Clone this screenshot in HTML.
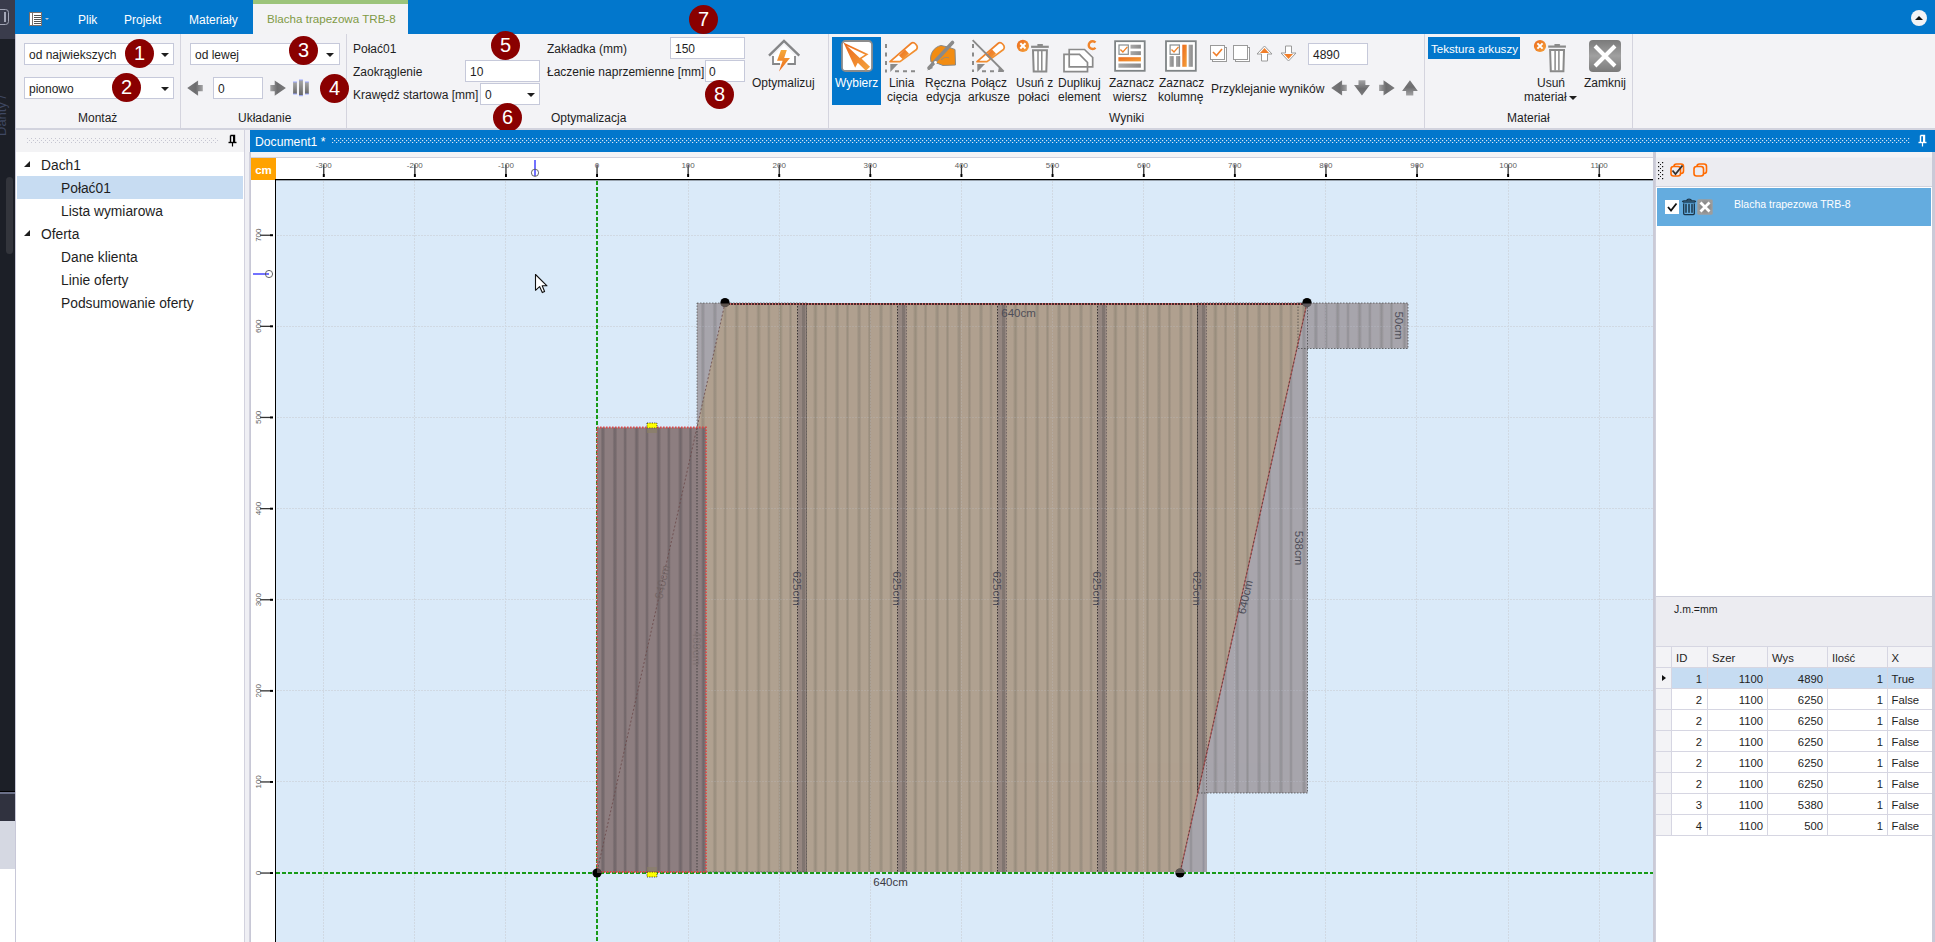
<!DOCTYPE html>
<html><head><meta charset="utf-8">
<style>
*{box-sizing:border-box}
html,body{margin:0;padding:0}
body{width:1935px;height:942px;overflow:hidden;position:relative;background:#fff;font-family:"Liberation Sans",sans-serif;font-size:12px;color:#1e1e1e}
.a{position:absolute}
.t{position:absolute;white-space:nowrap;line-height:1}
.blue{background:#0277cc}
.sep{position:absolute;width:1px;background:#d4d4de}
.cb{position:absolute;background:#fff;border:1px solid #c6c9da}
.arr{position:absolute;width:0;height:0;border-left:4px solid transparent;border-right:4px solid transparent;border-top:4px solid #1e1e1e}
.num{position:absolute;width:29px;height:29px;border-radius:50%;background:#8a0000;color:#fff;font-size:20px;line-height:29px;text-align:center}
.rl{position:absolute;white-space:nowrap;line-height:1;text-align:center}
</style></head>
<body>
<!-- left dark strip -->
<div class="a" style="left:0;top:0;width:15px;height:942px;background:#1c1f27"></div>
<div class="a" style="left:0;top:0;width:15px;height:39px;background:#3a3c4c"></div>
<div class="a" style="left:-6px;top:9px;width:15px;height:16px;border:1.4px solid #a3a6b6;border-radius:3.5px"></div>
<div class="a" style="left:4px;top:12px;width:2px;height:10px;background:#a3a6b6"></div>
<div class="a" style="left:0;top:39px;width:15px;height:140px;overflow:hidden"><div class="t" style="left:-6px;top:95px;transform-origin:0 0;transform:rotate(-90deg);color:#3f4862;font-size:13px;left:-5px;top:97px">Danty /</div></div>
<div class="a" style="left:6px;top:177px;width:7px;height:77px;background:#33353c;border-radius:4px"></div>
<div class="a" style="left:0;top:791px;width:15px;height:1px;background:#000"></div>
<div class="a" style="left:0;top:792px;width:15px;height:2px;background:#6b7088"></div>
<div class="a" style="left:0;top:794px;width:15px;height:27px;background:#30323f"></div>
<div class="a" style="left:0;top:821px;width:15px;height:48px;background:#d5d8e2"></div>
<div class="a" style="left:0;top:869px;width:15px;height:73px;background:#fff"></div>
<div class="a" style="left:15px;top:34px;width:1px;height:908px;background:#c8c8d8"></div>

<!-- title/tab bar -->
<div class="a blue" style="left:15px;top:0;width:1920px;height:34px"></div>

<!-- app menu icon -->
<div class="a" style="left:29px;top:12px;width:13px;height:14px;background:#fff;border:1px solid #7a6f6a"></div>
<div class="a" style="left:32px;top:13px;width:1px;height:12px;background:#7a6f6a"></div>
<div class="a" style="left:34px;top:15px;width:7px;height:1px;background:#555"></div>
<div class="a" style="left:34px;top:17px;width:7px;height:1px;background:#555"></div>
<div class="a" style="left:34px;top:19px;width:7px;height:1px;background:#555"></div>
<div class="a" style="left:34px;top:21px;width:7px;height:1px;background:#555"></div>
<div class="a" style="left:34px;top:23px;width:7px;height:1px;background:#555"></div>
<div class="a" style="left:45px;top:18px;width:0;height:0;border-left:2px solid transparent;border-right:2px solid transparent;border-top:2px solid #b9c6d6"></div>
<div class="t" style="left:78px;top:14px;color:#fff;font-size:12px">Plik</div>
<div class="t" style="left:124px;top:14px;color:#fff;font-size:12px">Projekt</div>
<div class="t" style="left:189px;top:14px;color:#fff;font-size:12px">Materiały</div>
<div class="a" style="left:253px;top:0;width:155px;height:34px;background:#f3f3f5"></div>
<div class="a" style="left:253px;top:0;width:155px;height:4px;background:#9cc47a"></div>
<div class="t" style="left:267px;top:13px;color:#7f9a45;font-size:11.6px">Blacha trapezowa TRB-8</div>
<div class="a" style="left:1911px;top:10px;width:16px;height:16px;border-radius:50%;background:#f3f3f5"></div>
<div class="a" style="left:1915px;top:16px;width:0;height:0;border-left:4px solid transparent;border-right:4px solid transparent;border-bottom:4px solid #111"></div>

<!-- ribbon -->
<div class="a" style="left:16px;top:34px;width:1919px;height:94px;background:#f3f3f6"></div>
<div class="a" style="left:16px;top:128px;width:1919px;height:2px;background:#d2d3de"></div>
<div class="sep" style="left:180px;top:34px;height:94px"></div>
<div class="sep" style="left:346px;top:34px;height:94px"></div>
<div class="sep" style="left:828px;top:34px;height:94px"></div>
<div class="sep" style="left:1424px;top:34px;height:94px"></div>
<div class="sep" style="left:1632px;top:34px;height:94px"></div>

<!-- Montaz group -->
<div class="cb" style="left:24px;top:43px;width:150px;height:22px"></div>
<div class="t" style="left:29px;top:49px">od najwiekszych</div>
<div class="arr" style="left:161px;top:53px"></div>
<div class="cb" style="left:24px;top:77px;width:150px;height:22px"></div>
<div class="t" style="left:29px;top:83px">pionowo</div>
<div class="arr" style="left:161px;top:87px"></div>
<div class="t" style="left:78px;top:112px">Montaż</div>
<div class="num" style="left:125px;top:39px">1</div>
<div class="num" style="left:112px;top:73px">2</div>

<!-- Ukladanie -->
<div class="cb" style="left:190px;top:43px;width:150px;height:22px"></div>
<div class="t" style="left:195px;top:49px">od lewej</div>
<div class="arr" style="left:326px;top:53px"></div>
<svg class="a" style="left:186px;top:79px" width="19" height="18" viewBox="186 79 19 18"><defs><linearGradient id="gl187" gradientUnits="userSpaceOnUse" x1="187.2" y1="0" x2="202.79999999999998" y2="0"><stop offset="0" stop-color="#7a7a7c"/><stop offset="0.55" stop-color="#6c6c6e"/><stop offset="1" stop-color="#a4a4a6"/></linearGradient></defs><path d="M187.2 88.10000000000001 L198.1 80.4 V84.9 H202.79999999999998 V91.30000000000001 H198.1 V95.80000000000001 Z" fill="url(#gl187)"/></svg>
<div class="cb" style="left:213px;top:77px;width:50px;height:22px"></div>
<div class="t" style="left:218px;top:83px">0</div>
<svg class="a" style="left:269px;top:79px" width="19" height="18" viewBox="269 79 19 18"><defs><linearGradient id="gr270" gradientUnits="userSpaceOnUse" x1="270.3" y1="0" x2="285.90000000000003" y2="0"><stop offset="0" stop-color="#a4a4a6"/><stop offset="0.45" stop-color="#6c6c6e"/><stop offset="1" stop-color="#7a7a7c"/></linearGradient></defs><path d="M285.90000000000003 88.10000000000001 L274.7 80.4 V84.9 H270.3 V91.30000000000001 H274.7 V95.80000000000001 Z" fill="url(#gr270)"/></svg>
<svg class="a" style="left:290px;top:78px" width="22" height="20" viewBox="290 78 22 20"><defs><linearGradient id="gbar" x1="0" y1="0" x2="0" y2="1"><stop offset="0" stop-color="#a8a8a8"/><stop offset="1" stop-color="#666"/></linearGradient></defs><rect x="293.1" y="82" width="3.8" height="12" fill="url(#gbar)"/><rect x="299" y="80" width="3.9" height="15.5" fill="url(#gbar)"/><rect x="305" y="82" width="3.8" height="12" fill="url(#gbar)"/><rect x="293.1" y="81.5" width="3.8" height="1" fill="#9aa6ff"/><rect x="293.1" y="93.5" width="3.8" height="1" fill="#9aa6ff"/><rect x="299" y="79.5" width="3.9" height="1" fill="#9aa6ff"/><rect x="299" y="95.2" width="3.9" height="1" fill="#9aa6ff"/><rect x="305" y="81.5" width="3.8" height="1" fill="#9aa6ff"/><rect x="305" y="93.5" width="3.8" height="1" fill="#9aa6ff"/></svg>
<div class="t" style="left:238px;top:112px">Układanie</div>
<div class="num" style="left:289px;top:36px">3</div>
<div class="num" style="left:320px;top:74px">4</div>

<!-- Optymalizacja -->
<div class="t" style="left:353px;top:43px">Połać01</div>
<div class="t" style="left:353px;top:66px">Zaokrąglenie</div>
<div class="t" style="left:353px;top:89px">Krawędź startowa [mm]</div>
<div class="cb" style="left:465px;top:60px;width:75px;height:22px"></div>
<div class="t" style="left:470px;top:66px">10</div>
<div class="cb" style="left:480px;top:83px;width:60px;height:22px"></div>
<div class="t" style="left:485px;top:89px">0</div>
<div class="arr" style="left:527px;top:93px"></div>
<div class="t" style="left:547px;top:43px">Zakładka (mm)</div>
<div class="t" style="left:547px;top:66px">Łaczenie naprzemienne [mm]</div>
<div class="cb" style="left:670px;top:37px;width:75px;height:22px"></div>
<div class="t" style="left:675px;top:43px">150</div>
<div class="cb" style="left:705px;top:60px;width:40px;height:22px"></div>
<div class="t" style="left:709px;top:66px">0</div>
<div class="t" style="left:551px;top:112px">Optymalizacja</div>
<svg class="a" style="left:764px;top:37px" width="40" height="37" viewBox="764 37 40 37"><defs><linearGradient id="gbolt" x1="0" y1="0" x2="0" y2="1"><stop offset="0" stop-color="#f5a93a"/><stop offset="1" stop-color="#ec6a1c"/></linearGradient></defs><path d="M773 56 L784 45 L795 56 V64 H773 Z" fill="#fff"/><path d="M769 55.6 L784 41 L799.3 55.6" fill="none" stroke="#858688" stroke-width="2.4" stroke-linejoin="miter"/><path d="M773 56 V64 H780 M787.5 64 H795 V56" fill="none" stroke="#858688" stroke-width="1.8"/><path d="M781 50.1 L786.8 50.1 L784.2 58 L790 58 L779 71.5 L782.6 60.8 L777 60.8 Z" fill="url(#gbolt)"/></svg>
<div class="t" style="left:752px;top:77px">Optymalizuj</div>
<div class="num" style="left:491px;top:31px">5</div>
<div class="num" style="left:493px;top:103px">6</div>
<div class="num" style="left:689px;top:5px">7</div>
<div class="num" style="left:705px;top:80px">8</div>

<!-- Wyniki -->
<div class="a blue" style="left:832px;top:37px;width:49px;height:68px"></div>
<svg class="a" style="left:840px;top:39px" width="34" height="34" viewBox="840 39 34 34"><defs><linearGradient id="gor" x1="0" y1="0" x2="1" y2="1"><stop offset="0" stop-color="#ec6a1c"/><stop offset="1" stop-color="#f4a23c"/></linearGradient></defs><rect x="842" y="41" width="30" height="30" rx="3.5" fill="#fff" stroke="#8c8c8c" stroke-width="1.8"/><path d="M845.2 44.3 L866.8 54.4 L860.3 58.6 L868.8 66.8 L865.9 69.6 L857.6 61.3 L855.2 65.8 Z" fill="none" stroke="url(#gor)" stroke-width="1.7" stroke-linejoin="miter"/><path d="M845.2 44.3 L860.3 58.6 L868.8 66.8 L865.9 69.6 L857.6 61.3 L855.2 65.8 Z" fill="url(#gor)"/></svg>
<div class="t" style="left:835px;top:77px;color:#fff">Wybierz</div>
<svg class="a" style="left:884px;top:38px" width="36" height="36" viewBox="884 38 36 36"><path d="M886 44 V72.5" stroke="#8a8a8a" stroke-width="2" stroke-dasharray="4 4.5"/><path d="M895 71.2 H916" stroke="#8a8a8a" stroke-width="2" stroke-dasharray="4 4"/><path d="M890.3 72 V64 H898 Z" fill="#8a8a8a"/><path d="M890 61.6 L900 61.6 L916.5 49.5 C919 46 914 41 911 43.5 Z" fill="#fff" stroke="url(#gor)" stroke-width="1.7" stroke-linejoin="round"/><path d="M899 55.6 L905 49.6 L909 53.6 L903 59.6 Z" fill="url(#gor)"/></svg>
<div class="t" style="left:889px;top:77px">Linia</div>
<div class="t" style="left:887px;top:91px">cięcia</div>
<svg class="a" style="left:924px;top:38px" width="34" height="36" viewBox="924 38 34 36"><path d="M931 62 C929 54 934 47 941 45.5 L948 47 L955 49.5 L955.5 65 L943 65.5 L938 63.5 Z" fill="#f28c12" stroke="#8a8a8a" stroke-width="1"/><path d="M952.5 42.5 L929 68" stroke="#8a8a8a" stroke-width="3.6" stroke-linecap="round"/><path d="M931 66 L927 70.5 L933 68" fill="#8a8a8a"/><path d="M941 60 C944 57 947 57 949 58" stroke="#8a8a8a" stroke-width="0.9" fill="none"/><circle cx="935.5" cy="62.5" r="1.4" fill="#fff"/></svg>
<div class="t" style="left:925px;top:77px">Ręczna</div>
<div class="t" style="left:926px;top:91px">edycja</div>
<svg class="a" style="left:970px;top:38px" width="36" height="36" viewBox="970 38 36 36"><path d="M973 44 V72" stroke="#8a8a8a" stroke-width="2" stroke-dasharray="4 4.5"/><path d="M982 71.2 H997" stroke="#8a8a8a" stroke-width="2" stroke-dasharray="4 4"/><path d="M977.3 72 V64 H985 Z" fill="#8a8a8a"/><path d="M977 61.6 L987 61.6 L1003.5 49.5 C1006 46 1001 41 998 43.5 Z" fill="#fff" stroke="url(#gor)" stroke-width="1.7" stroke-linejoin="round"/><path d="M986 55.6 L992 49.6 L996 53.6 L990 59.6 Z" fill="url(#gor)"/><path d="M972.6 40.2 L1003.7 71.5" stroke="#8a8a8a" stroke-width="1.8"/><path d="M998 72 L1004 72 L999 66.5 Z" fill="#8a8a8a"/></svg>
<div class="t" style="left:971px;top:77px">Połącz</div>
<div class="t" style="left:968px;top:91px">arkusze</div>
<svg class="a" style="left:1015px;top:38px" width="36" height="36" viewBox="1015 38 36 36"><circle cx="1022.9" cy="45.9" r="6.1" fill="url(#gor)"/><path d="M1020.3 43.3 L1025.5 48.5 M1025.5 43.3 L1020.3 48.5" stroke="#fff" stroke-width="2"/><rect x="1037.1" y="44.1" width="6" height="2" rx="1" fill="#8a8a8a"/><rect x="1031.1" y="45.7" width="17.7" height="2.2" fill="#8a8a8a"/><path d="M1033.0 50.2 H1046.8999999999999 L1046.3 71.5 H1033.6999999999998 Z" fill="#fff" stroke="#8a8a8a" stroke-width="2"/><path d="M1038.0 50.7 V70.7 M1041.8 50.7 V70.7" stroke="#8a8a8a" stroke-width="1.5"/></svg>
<div class="t" style="left:1016px;top:77px">Usuń z</div>
<div class="t" style="left:1018px;top:91px">połaci</div>
<svg class="a" style="left:1062px;top:38px" width="36" height="36" viewBox="1062 38 36 36"><path d="M1069.2 66.8 V49.5 H1084.5 L1092.7 57.5 V66.8 Z" fill="#fff" stroke="#8a8a8a" stroke-width="1.7"/><path d="M1064 71.6 V54.3 H1079.5 L1087.5 62.5 V71.6 Z" fill="#fff" stroke="#8a8a8a" stroke-width="1.7"/><path d="M1069.2 54.3 V66.8 H1087.5" fill="none" stroke="#8a8a8a" stroke-width="1.7"/><path d="M1095.5 42.5 A3.9 3.9 0 1 0 1095.5 47.8" fill="none" stroke="#f0842a" stroke-width="2.4"/></svg>
<div class="t" style="left:1058px;top:77px">Duplikuj</div>
<div class="t" style="left:1058px;top:91px">element</div>
<svg class="a" style="left:1113px;top:39px" width="34" height="34" viewBox="1113 39 34 34"><defs><linearGradient id="ggr" x1="0" y1="0" x2="1" y2="0"><stop offset="0" stop-color="#a8a8a8"/><stop offset="1" stop-color="#8a8a8a"/></linearGradient></defs><rect x="1115.1" y="41.2" width="29.6" height="29.6" fill="#fff" stroke="#7f8486" stroke-width="1.8"/><rect x="1119.0" y="45.0" width="9.3" height="9.3" fill="#fff" stroke="#888e90" stroke-width="1.2"/><path d="M1120.4 49.4 L1122.9 51.9 L1127.4 46.9" fill="none" stroke="#f0842a" stroke-width="1.4"/><rect x="1130.5" y="44.7" width="10.4" height="3.9" fill="url(#ggr)"/><rect x="1130.5" y="51.2" width="10.4" height="3.9" fill="url(#ggr)"/><rect x="1118.4" y="57.2" width="22.5" height="4.2" fill="url(#gor)"/><rect x="1118.4" y="63.5" width="22.5" height="4.2" fill="url(#ggr)"/></svg>
<div class="t" style="left:1109px;top:77px">Zaznacz</div>
<div class="t" style="left:1113px;top:91px">wiersz</div>
<svg class="a" style="left:1164px;top:39px" width="34" height="34" viewBox="1164 39 34 34"><rect x="1166" y="41.2" width="29.8" height="29.6" fill="#fff" stroke="#7f8486" stroke-width="1.8"/><rect x="1170.1" y="45.0" width="9.3" height="9.3" fill="#fff" stroke="#888e90" stroke-width="1.2"/><path d="M1171.5 49.4 L1174.0 51.9 L1178.5 46.9" fill="none" stroke="#f0842a" stroke-width="1.4"/><rect x="1169.5" y="56.1" width="4.2" height="10.7" fill="url(#ggr)"/><rect x="1176" y="56.1" width="4.2" height="10.7" fill="url(#ggr)"/><rect x="1182.3" y="44.7" width="4.4" height="22.1" fill="url(#gor)"/><rect x="1188.6" y="44.7" width="4.2" height="22.1" fill="url(#ggr)"/></svg>
<div class="t" style="left:1159px;top:77px">Zaznacz</div>
<div class="t" style="left:1158px;top:91px">kolumnę</div>
<div class="t" style="left:1109px;top:112px">Wyniki</div>

<svg class="a" style="left:1210px;top:45px" width="18" height="18" viewBox="0 0 18 18"><rect x="2.5" y="2.5" width="14" height="14" fill="#fff" stroke="#9a9a9a"/><rect x="0.5" y="0.5" width="14" height="14" fill="#fff" stroke="#9a9a9a"/><path d="M3 7 L6.5 10.5 L12 4" stroke="#f07e2a" stroke-width="1.6" fill="none"/></svg>
<svg class="a" style="left:1233px;top:45px" width="18" height="18" viewBox="0 0 18 18"><rect x="2.5" y="2.5" width="14" height="14" fill="#fff" stroke="#9a9a9a"/><rect x="0.5" y="0.5" width="14" height="14" fill="#fff" stroke="#9a9a9a"/></svg>
<svg class="a" style="left:1256px;top:45px" width="17" height="17" viewBox="0 0 17 17"><path d="M8.5 1 L16 9 L11.5 9 L11.5 16 L5.5 16 L5.5 9 L1 9 Z" fill="#fff" stroke="#9a9a9a"/><path d="M8.5 3 L13 8 L4 8 Z" fill="#f07e2a"/></svg>
<svg class="a" style="left:1280px;top:45px" width="17" height="17" viewBox="0 0 17 17"><path d="M8.5 16 L16 8 L11.5 8 L11.5 1 L5.5 1 L5.5 8 L1 8 Z" fill="#fff" stroke="#9a9a9a"/><path d="M8.5 14 L13 9 L4 9 Z" fill="#f07e2a"/></svg>
<div class="cb" style="left:1308px;top:43px;width:60px;height:22px"></div>
<div class="t" style="left:1313px;top:49px">4890</div>
<div class="t" style="left:1211px;top:83px">Przyklejanie wyników</div>
<svg class="a" style="left:1330px;top:79px" width="19" height="18" viewBox="1330 79 19 18"><defs><linearGradient id="gl1331" gradientUnits="userSpaceOnUse" x1="1331.2" y1="0" x2="1346.8" y2="0"><stop offset="0" stop-color="#7a7a7c"/><stop offset="0.55" stop-color="#6c6c6e"/><stop offset="1" stop-color="#a4a4a6"/></linearGradient></defs><path d="M1331.2 87.9 L1342.1000000000001 80.2 V84.7 H1346.8 V91.10000000000001 H1342.1000000000001 V95.60000000000001 Z" fill="url(#gl1331)"/></svg>
<svg class="a" style="left:1353px;top:79px" width="18" height="18" viewBox="1353 79 18 18"><defs><linearGradient id="gd1354" gradientUnits="userSpaceOnUse" x1="0" y1="80.2" x2="0" y2="95.60000000000001"><stop offset="0" stop-color="#a4a4a6"/><stop offset="0.55" stop-color="#6c6c6e"/><stop offset="1" stop-color="#7a7a7c"/></linearGradient></defs><path d="M1361.95 95.60000000000001 L1354 84.9 H1358.5 V80.2 H1365.4 V84.9 H1369.9 Z" fill="url(#gd1354)"/></svg>
<svg class="a" style="left:1378px;top:79px" width="19" height="18" viewBox="1378 79 19 18"><defs><linearGradient id="gr1379" gradientUnits="userSpaceOnUse" x1="1379.1" y1="0" x2="1394.6999999999998" y2="0"><stop offset="0" stop-color="#a4a4a6"/><stop offset="0.45" stop-color="#6c6c6e"/><stop offset="1" stop-color="#7a7a7c"/></linearGradient></defs><path d="M1394.6999999999998 87.9 L1383.5 80.2 V84.7 H1379.1 V91.10000000000001 H1383.5 V95.60000000000001 Z" fill="url(#gr1379)"/></svg>
<svg class="a" style="left:1401px;top:79px" width="18" height="18" viewBox="1401 79 18 18"><defs><linearGradient id="gu1402" gradientUnits="userSpaceOnUse" x1="0" y1="80.2" x2="0" y2="95.60000000000001"><stop offset="0" stop-color="#7a7a7c"/><stop offset="0.45" stop-color="#6c6c6e"/><stop offset="1" stop-color="#a4a4a6"/></linearGradient></defs><path d="M1409.9499999999998 80.2 L1417.8 91.10000000000001 H1413.3 V95.60000000000001 H1406.1 V91.10000000000001 H1402.1 Z" fill="url(#gu1402)"/></svg>

<!-- Material -->
<div class="a blue" style="left:1428px;top:37px;width:92px;height:22px"></div>
<div class="t" style="left:1431px;top:43px;color:#fff;font-size:11.6px">Tekstura arkuszy</div>
<svg class="a" style="left:1532px;top:38px" width="38" height="36" viewBox="1532 38 38 36"><circle cx="1540" cy="46" r="6.1" fill="url(#gor)"/><path d="M1537.4 43.4 L1542.6 48.6 M1542.6 43.4 L1537.4 48.6" stroke="#fff" stroke-width="2"/><rect x="1554.2" y="43.9" width="6" height="2" rx="1" fill="#8a8a8a"/><rect x="1548.2" y="45.5" width="17.7" height="2.2" fill="#8a8a8a"/><path d="M1550.1000000000001 50.0 H1564.0 L1563.4 71.3 H1550.8 Z" fill="#fff" stroke="#8a8a8a" stroke-width="2"/><path d="M1555.1000000000001 50.5 V70.5 M1558.9 50.5 V70.5" stroke="#8a8a8a" stroke-width="1.5"/></svg>
<div class="t" style="left:1537px;top:77px">Usuń</div>
<div class="t" style="left:1524px;top:91px">materiał</div>
<div class="arr" style="left:1569px;top:96px"></div>
<svg class="a" style="left:1589px;top:40px" width="32" height="32" viewBox="0 0 32 32"><defs><linearGradient id="gz" x1="0" y1="0" x2="0" y2="1"><stop offset="0" stop-color="#7a7a7a"/><stop offset="0.5" stop-color="#a0a0a0"/><stop offset="1" stop-color="#7a7a7a"/></linearGradient></defs><rect x="0" y="0" width="32" height="32" rx="4" fill="url(#gz)"/><path d="M6 6 L26 26 M26 6 L6 26" stroke="#fff" stroke-width="4"/></svg>
<div class="t" style="left:1584px;top:77px">Zamknij</div>
<div class="t" style="left:1507px;top:112px">Materiał</div>

<!-- dock background -->
<div class="a" style="left:16px;top:130px;width:1919px;height:812px;background:#efeff4"></div>
<!-- left panel -->
<div class="a" style="left:16px;top:130px;width:228px;height:22px;background:#f3f3f5"></div>
<svg class="a" style="left:26px;top:138px" width="193" height="6" viewBox="0 0 193 6"><defs><pattern id="gp1" width="4" height="4" patternUnits="userSpaceOnUse"><rect x="1" y="0" width="1" height="1" fill="#c6c6d2"/><rect x="3" y="2" width="1" height="1" fill="#c6c6d2"/></pattern></defs><rect width="193" height="5" fill="url(#gp1)"/></svg>
<svg class="a" style="left:228px;top:134px" width="9" height="13" viewBox="0 0 9 13"><path d="M2.5 1.5 H6.5 V8 M2.5 1.5 V8" fill="none" stroke="#000" stroke-width="1.4"/><rect x="5" y="1" width="2" height="7" fill="#000"/><path d="M0.5 8.5 H8.5" stroke="#000" stroke-width="1.4"/><path d="M4.5 9 V12.5" stroke="#000" stroke-width="1.2"/></svg>
<div class="a" style="left:16px;top:152px;width:228px;height:790px;background:#fff"></div>
<div class="a" style="left:17px;top:176px;width:226px;height:23px;background:#c7dcf2"></div>
<div class="a" style="left:24px;top:161px;width:0;height:0;border-left:6px solid transparent;border-bottom:6px solid #1e1e1e"></div>
<div class="a" style="left:24px;top:230px;width:0;height:0;border-left:6px solid transparent;border-bottom:6px solid #1e1e1e"></div>
<div class="t" style="left:41px;top:159px;font-size:13.8px">Dach1</div>
<div class="t" style="left:61px;top:182px;font-size:13.8px">Połać01</div>
<div class="t" style="left:61px;top:205px;font-size:13.8px">Lista wymiarowa</div>
<div class="t" style="left:41px;top:228px;font-size:13.8px">Oferta</div>
<div class="t" style="left:61px;top:251px;font-size:13.8px">Dane klienta</div>
<div class="t" style="left:61px;top:274px;font-size:13.8px">Linie oferty</div>
<div class="t" style="left:61px;top:297px;font-size:13.8px">Podsumowanie oferty</div>
<!-- splitter -->
<div class="a" style="left:244px;top:130px;width:1px;height:812px;background:#d2d2de"></div>
<div class="a" style="left:249px;top:152px;width:1px;height:790px;background:#d2d2de"></div>

<!-- document tab header -->
<div class="a blue" style="left:250px;top:130px;width:1685px;height:22px"></div>
<div class="t" style="left:255px;top:136px;color:#fff;font-size:12.2px">Document1 *</div>
<svg class="a" style="left:332px;top:138px" width="1578" height="6" viewBox="0 0 1578 6"><defs><pattern id="gp2" width="4" height="4" patternUnits="userSpaceOnUse"><rect x="0" y="0" width="1.2" height="1.2" fill="#d8e6f4"/><rect x="2" y="2" width="1.2" height="1.2" fill="#d8e6f4"/></pattern></defs><rect width="1578" height="5" fill="url(#gp2)"/></svg>
<svg class="a" style="left:1918px;top:134px" width="9" height="13" viewBox="0 0 9 13"><path d="M2.5 1.5 H6.5 V8 M2.5 1.5 V8" fill="none" stroke="#fff" stroke-width="1.4"/><rect x="5" y="1" width="2" height="7" fill="#fff"/><path d="M0.5 8.5 H8.5" stroke="#fff" stroke-width="1.4"/><path d="M4.5 9 V12.5" stroke="#fff" stroke-width="1.2"/></svg>
<div class="a" style="left:250px;top:152px;width:1685px;height:5px;background:#f3f3f6"></div>
<div class="a" style="left:250px;top:157px;width:1403px;height:1px;background:#d0d0dc"></div>
<div class="a" style="left:250px;top:152px;width:1px;height:790px;background:#c8c8d6"></div>

<!--CANVAS-->
<svg class="a" style="left:251px;top:158px" width="1402" height="784" viewBox="251 158 1402 784">
<defs>
<clipPath id="poly"><polygon points="725,303 1307,303 1180,872 597,872"/></clipPath>
<linearGradient id="stw" x1="0" x2="1"><stop offset="0" stop-color="#000" stop-opacity="0"/><stop offset="0.5" stop-color="#1e2a20" stop-opacity="0.16"/><stop offset="1" stop-color="#000" stop-opacity="0"/></linearGradient>
<linearGradient id="stg" x1="0" x2="1"><stop offset="0" stop-color="#000" stop-opacity="0"/><stop offset="0.5" stop-color="#203050" stop-opacity="0.16"/><stop offset="1" stop-color="#000" stop-opacity="0"/></linearGradient>
<linearGradient id="sts" x1="0" x2="1"><stop offset="0" stop-color="#000" stop-opacity="0"/><stop offset="0.5" stop-color="#303038" stop-opacity="0.3"/><stop offset="1" stop-color="#000" stop-opacity="0"/></linearGradient>
</defs>
<rect x="251" y="158" width="1402" height="22" fill="#fff"/>
<rect x="251" y="180" width="25" height="762" fill="#fff"/>
<rect x="276" y="180" width="1377" height="762" fill="#daeaf9"/>
<rect x="251" y="158" width="25" height="22" fill="#ffa200"/>
<text x="263.5" y="174" font-family="Liberation Sans" font-weight="bold" font-size="11.5" fill="#fff" text-anchor="middle">cm</text>
<rect x="275" y="179" width="1378" height="1.3" fill="#000"/>
<rect x="275" y="179" width="1" height="763" fill="#000"/>
<line x1="323.5" y1="181" x2="323.5" y2="942" stroke="#d0d9e3" stroke-width="1" stroke-dasharray="2 1"/>
<line x1="414.5" y1="181" x2="414.5" y2="942" stroke="#d0d9e3" stroke-width="1" stroke-dasharray="2 1"/>
<line x1="505.5" y1="181" x2="505.5" y2="942" stroke="#d0d9e3" stroke-width="1" stroke-dasharray="2 1"/>
<line x1="688.5" y1="181" x2="688.5" y2="942" stroke="#d0d9e3" stroke-width="1" stroke-dasharray="2 1"/>
<line x1="779.5" y1="181" x2="779.5" y2="942" stroke="#d0d9e3" stroke-width="1" stroke-dasharray="2 1"/>
<line x1="870.5" y1="181" x2="870.5" y2="942" stroke="#d0d9e3" stroke-width="1" stroke-dasharray="2 1"/>
<line x1="961.5" y1="181" x2="961.5" y2="942" stroke="#d0d9e3" stroke-width="1" stroke-dasharray="2 1"/>
<line x1="1052.5" y1="181" x2="1052.5" y2="942" stroke="#d0d9e3" stroke-width="1" stroke-dasharray="2 1"/>
<line x1="1143.5" y1="181" x2="1143.5" y2="942" stroke="#d0d9e3" stroke-width="1" stroke-dasharray="2 1"/>
<line x1="1234.5" y1="181" x2="1234.5" y2="942" stroke="#d0d9e3" stroke-width="1" stroke-dasharray="2 1"/>
<line x1="1325.5" y1="181" x2="1325.5" y2="942" stroke="#d0d9e3" stroke-width="1" stroke-dasharray="2 1"/>
<line x1="1416.5" y1="181" x2="1416.5" y2="942" stroke="#d0d9e3" stroke-width="1" stroke-dasharray="2 1"/>
<line x1="1508.5" y1="181" x2="1508.5" y2="942" stroke="#d0d9e3" stroke-width="1" stroke-dasharray="2 1"/>
<line x1="1599.5" y1="181" x2="1599.5" y2="942" stroke="#d0d9e3" stroke-width="1" stroke-dasharray="2 1"/>
<line x1="277" y1="964.5" x2="1653" y2="964.5" stroke="#d0d9e3" stroke-width="1" stroke-dasharray="2 1"/>
<line x1="277" y1="781.5" x2="1653" y2="781.5" stroke="#d0d9e3" stroke-width="1" stroke-dasharray="2 1"/>
<line x1="277" y1="690.5" x2="1653" y2="690.5" stroke="#d0d9e3" stroke-width="1" stroke-dasharray="2 1"/>
<line x1="277" y1="599.5" x2="1653" y2="599.5" stroke="#d0d9e3" stroke-width="1" stroke-dasharray="2 1"/>
<line x1="277" y1="508.5" x2="1653" y2="508.5" stroke="#d0d9e3" stroke-width="1" stroke-dasharray="2 1"/>
<line x1="277" y1="417.5" x2="1653" y2="417.5" stroke="#d0d9e3" stroke-width="1" stroke-dasharray="2 1"/>
<line x1="277" y1="326.5" x2="1653" y2="326.5" stroke="#d0d9e3" stroke-width="1" stroke-dasharray="2 1"/>
<line x1="277" y1="235.5" x2="1653" y2="235.5" stroke="#d0d9e3" stroke-width="1" stroke-dasharray="2 1"/>
<rect x="323.09999999999997" y="164.5" width="1.3" height="12" fill="#333"/><rect x="322.8" y="174" width="1.9" height="3" fill="#000"/>
<text x="323.7" y="168" font-family="Liberation Sans" font-size="8" fill="#5e5e5e" text-anchor="middle">-300</text>
<rect x="414.2" y="164.5" width="1.3" height="12" fill="#333"/><rect x="413.90000000000003" y="174" width="1.9" height="3" fill="#000"/>
<text x="414.8" y="168" font-family="Liberation Sans" font-size="8" fill="#5e5e5e" text-anchor="middle">-200</text>
<rect x="505.29999999999995" y="164.5" width="1.3" height="12" fill="#333"/><rect x="505.0" y="174" width="1.9" height="3" fill="#000"/>
<text x="505.9" y="168" font-family="Liberation Sans" font-size="8" fill="#5e5e5e" text-anchor="middle">-100</text>
<rect x="596.4" y="164.5" width="1.3" height="12" fill="#333"/><rect x="596.1" y="174" width="1.9" height="3" fill="#000"/>
<text x="597.0" y="168" font-family="Liberation Sans" font-size="8" fill="#5e5e5e" text-anchor="middle">0</text>
<rect x="687.5" y="164.5" width="1.3" height="12" fill="#333"/><rect x="687.2" y="174" width="1.9" height="3" fill="#000"/>
<text x="688.1" y="168" font-family="Liberation Sans" font-size="8" fill="#5e5e5e" text-anchor="middle">100</text>
<rect x="778.6" y="164.5" width="1.3" height="12" fill="#333"/><rect x="778.3000000000001" y="174" width="1.9" height="3" fill="#000"/>
<text x="779.2" y="168" font-family="Liberation Sans" font-size="8" fill="#5e5e5e" text-anchor="middle">200</text>
<rect x="869.6999999999999" y="164.5" width="1.3" height="12" fill="#333"/><rect x="869.4" y="174" width="1.9" height="3" fill="#000"/>
<text x="870.3" y="168" font-family="Liberation Sans" font-size="8" fill="#5e5e5e" text-anchor="middle">300</text>
<rect x="960.8" y="164.5" width="1.3" height="12" fill="#333"/><rect x="960.5" y="174" width="1.9" height="3" fill="#000"/>
<text x="961.4" y="168" font-family="Liberation Sans" font-size="8" fill="#5e5e5e" text-anchor="middle">400</text>
<rect x="1051.9" y="164.5" width="1.3" height="12" fill="#333"/><rect x="1051.6" y="174" width="1.9" height="3" fill="#000"/>
<text x="1052.5" y="168" font-family="Liberation Sans" font-size="8" fill="#5e5e5e" text-anchor="middle">500</text>
<rect x="1143.1000000000001" y="164.5" width="1.3" height="12" fill="#333"/><rect x="1142.8" y="174" width="1.9" height="3" fill="#000"/>
<text x="1143.7" y="168" font-family="Liberation Sans" font-size="8" fill="#5e5e5e" text-anchor="middle">600</text>
<rect x="1234.2" y="164.5" width="1.3" height="12" fill="#333"/><rect x="1233.8999999999999" y="174" width="1.9" height="3" fill="#000"/>
<text x="1234.8" y="168" font-family="Liberation Sans" font-size="8" fill="#5e5e5e" text-anchor="middle">700</text>
<rect x="1325.3000000000002" y="164.5" width="1.3" height="12" fill="#333"/><rect x="1325.0" y="174" width="1.9" height="3" fill="#000"/>
<text x="1325.9" y="168" font-family="Liberation Sans" font-size="8" fill="#5e5e5e" text-anchor="middle">800</text>
<rect x="1416.4" y="164.5" width="1.3" height="12" fill="#333"/><rect x="1416.1" y="174" width="1.9" height="3" fill="#000"/>
<text x="1417.0" y="168" font-family="Liberation Sans" font-size="8" fill="#5e5e5e" text-anchor="middle">900</text>
<rect x="1507.5" y="164.5" width="1.3" height="12" fill="#333"/><rect x="1507.1999999999998" y="174" width="1.9" height="3" fill="#000"/>
<text x="1508.1" y="168" font-family="Liberation Sans" font-size="8" fill="#5e5e5e" text-anchor="middle">1000</text>
<rect x="1598.6000000000001" y="164.5" width="1.3" height="12" fill="#333"/><rect x="1598.3" y="174" width="1.9" height="3" fill="#000"/>
<text x="1599.2" y="168" font-family="Liberation Sans" font-size="8" fill="#5e5e5e" text-anchor="middle">1100</text>
<rect x="260" y="872.4" width="13" height="1.3" fill="#333"/><rect x="270" y="872.1" width="3" height="1.9" fill="#000"/>
<text x="0" y="0" transform="translate(261,873.0) rotate(-90)" font-family="Liberation Sans" font-size="8" fill="#5e5e5e" text-anchor="middle">0</text>
<rect x="260" y="781.3" width="13" height="1.3" fill="#333"/><rect x="270" y="781.0" width="3" height="1.9" fill="#000"/>
<text x="0" y="0" transform="translate(261,781.9) rotate(-90)" font-family="Liberation Sans" font-size="8" fill="#5e5e5e" text-anchor="middle">100</text>
<rect x="260" y="690.1999999999999" width="13" height="1.3" fill="#333"/><rect x="270" y="689.9" width="3" height="1.9" fill="#000"/>
<text x="0" y="0" transform="translate(261,690.8) rotate(-90)" font-family="Liberation Sans" font-size="8" fill="#5e5e5e" text-anchor="middle">200</text>
<rect x="260" y="599.1" width="13" height="1.3" fill="#333"/><rect x="270" y="598.8000000000001" width="3" height="1.9" fill="#000"/>
<text x="0" y="0" transform="translate(261,599.7) rotate(-90)" font-family="Liberation Sans" font-size="8" fill="#5e5e5e" text-anchor="middle">300</text>
<rect x="260" y="508.0" width="13" height="1.3" fill="#333"/><rect x="270" y="507.70000000000005" width="3" height="1.9" fill="#000"/>
<text x="0" y="0" transform="translate(261,508.6) rotate(-90)" font-family="Liberation Sans" font-size="8" fill="#5e5e5e" text-anchor="middle">400</text>
<rect x="260" y="416.79999999999995" width="13" height="1.3" fill="#333"/><rect x="270" y="416.5" width="3" height="1.9" fill="#000"/>
<text x="0" y="0" transform="translate(261,417.4) rotate(-90)" font-family="Liberation Sans" font-size="8" fill="#5e5e5e" text-anchor="middle">500</text>
<rect x="260" y="325.7" width="13" height="1.3" fill="#333"/><rect x="270" y="325.40000000000003" width="3" height="1.9" fill="#000"/>
<text x="0" y="0" transform="translate(261,326.3) rotate(-90)" font-family="Liberation Sans" font-size="8" fill="#5e5e5e" text-anchor="middle">600</text>
<rect x="260" y="234.6" width="13" height="1.3" fill="#333"/><rect x="270" y="234.29999999999998" width="3" height="1.9" fill="#000"/>
<text x="0" y="0" transform="translate(261,235.2) rotate(-90)" font-family="Liberation Sans" font-size="8" fill="#5e5e5e" text-anchor="middle">700</text>
<rect x="534" y="160" width="2" height="16" fill="#7272ff"/><circle cx="535" cy="172.8" r="3.6" fill="none" stroke="#555" stroke-width="0.9"/>
<rect x="253" y="273" width="16" height="2" fill="#7272ff"/><circle cx="269" cy="274" r="3.6" fill="none" stroke="#555" stroke-width="0.9"/>
<line x1="597" y1="181" x2="597" y2="942" stroke="#189a18" stroke-width="2" stroke-dasharray="4 2"/>
<rect x="697" y="303" width="109.4" height="569" fill="#a8a5ac"/>
<rect x="697" y="303" width="109.4" height="569" fill="#b0a190" clip-path="url(#poly)"/>
<rect x="700.50" y="303" width="4.80" height="569" fill="url(#stw)"/>
<rect x="712.40" y="303" width="5.00" height="569" fill="url(#stw)"/>
<rect x="723.20" y="303" width="3.80" height="569" fill="url(#stw)"/>
<rect x="734.20" y="303" width="5.00" height="569" fill="url(#stw)"/>
<rect x="745.10" y="303" width="3.80" height="569" fill="url(#stw)"/>
<rect x="756.10" y="303" width="5.00" height="569" fill="url(#stw)"/>
<rect x="767.00" y="303" width="3.80" height="569" fill="url(#stw)"/>
<rect x="778.00" y="303" width="5.00" height="569" fill="url(#stw)"/>
<rect x="788.60" y="303" width="3.80" height="569" fill="url(#stw)"/>
<rect x="801.10" y="303" width="4.80" height="569" fill="url(#stw)"/>
<rect x="797.5" y="303" width="109" height="569" fill="#a8a5ac"/>
<rect x="797.5" y="303" width="109" height="569" fill="#b0a190" clip-path="url(#poly)"/>
<rect x="801.00" y="303" width="4.80" height="569" fill="url(#stw)"/>
<rect x="812.90" y="303" width="5.00" height="569" fill="url(#stw)"/>
<rect x="823.70" y="303" width="3.80" height="569" fill="url(#stw)"/>
<rect x="834.70" y="303" width="5.00" height="569" fill="url(#stw)"/>
<rect x="845.60" y="303" width="3.80" height="569" fill="url(#stw)"/>
<rect x="856.60" y="303" width="5.00" height="569" fill="url(#stw)"/>
<rect x="867.50" y="303" width="3.80" height="569" fill="url(#stw)"/>
<rect x="878.50" y="303" width="5.00" height="569" fill="url(#stw)"/>
<rect x="889.10" y="303" width="3.80" height="569" fill="url(#stw)"/>
<rect x="901.60" y="303" width="4.80" height="569" fill="url(#stw)"/>
<rect x="897.5" y="303" width="109" height="569" fill="#a8a5ac"/>
<rect x="897.5" y="303" width="109" height="569" fill="#b0a190" clip-path="url(#poly)"/>
<rect x="901.00" y="303" width="4.80" height="569" fill="url(#stw)"/>
<rect x="912.90" y="303" width="5.00" height="569" fill="url(#stw)"/>
<rect x="923.70" y="303" width="3.80" height="569" fill="url(#stw)"/>
<rect x="934.70" y="303" width="5.00" height="569" fill="url(#stw)"/>
<rect x="945.60" y="303" width="3.80" height="569" fill="url(#stw)"/>
<rect x="956.60" y="303" width="5.00" height="569" fill="url(#stw)"/>
<rect x="967.50" y="303" width="3.80" height="569" fill="url(#stw)"/>
<rect x="978.50" y="303" width="5.00" height="569" fill="url(#stw)"/>
<rect x="989.10" y="303" width="3.80" height="569" fill="url(#stw)"/>
<rect x="1001.60" y="303" width="4.80" height="569" fill="url(#stw)"/>
<rect x="997.5" y="303" width="109" height="569" fill="#a8a5ac"/>
<rect x="997.5" y="303" width="109" height="569" fill="#b0a190" clip-path="url(#poly)"/>
<rect x="1001.00" y="303" width="4.80" height="569" fill="url(#stw)"/>
<rect x="1012.90" y="303" width="5.00" height="569" fill="url(#stw)"/>
<rect x="1023.70" y="303" width="3.80" height="569" fill="url(#stw)"/>
<rect x="1034.70" y="303" width="5.00" height="569" fill="url(#stw)"/>
<rect x="1045.60" y="303" width="3.80" height="569" fill="url(#stw)"/>
<rect x="1056.60" y="303" width="5.00" height="569" fill="url(#stw)"/>
<rect x="1067.50" y="303" width="3.80" height="569" fill="url(#stw)"/>
<rect x="1078.50" y="303" width="5.00" height="569" fill="url(#stw)"/>
<rect x="1089.10" y="303" width="3.80" height="569" fill="url(#stw)"/>
<rect x="1101.60" y="303" width="4.80" height="569" fill="url(#stw)"/>
<rect x="1097.5" y="303" width="109" height="569" fill="#a8a5ac"/>
<rect x="1097.5" y="303" width="109" height="569" fill="#b0a190" clip-path="url(#poly)"/>
<rect x="1101.00" y="303" width="4.80" height="569" fill="url(#stw)"/>
<rect x="1112.90" y="303" width="5.00" height="569" fill="url(#stw)"/>
<rect x="1123.70" y="303" width="3.80" height="569" fill="url(#stw)"/>
<rect x="1134.70" y="303" width="5.00" height="569" fill="url(#stw)"/>
<rect x="1145.60" y="303" width="3.80" height="569" fill="url(#stw)"/>
<rect x="1156.60" y="303" width="5.00" height="569" fill="url(#stw)"/>
<rect x="1167.50" y="303" width="3.80" height="569" fill="url(#stw)"/>
<rect x="1178.50" y="303" width="5.00" height="569" fill="url(#stw)"/>
<rect x="1189.10" y="303" width="3.80" height="569" fill="url(#stw)"/>
<rect x="1201.60" y="303" width="4.80" height="569" fill="url(#stw)"/>
<rect x="1197.5" y="303" width="110" height="490" fill="#a8a5ac"/>
<rect x="1197.5" y="303" width="110" height="490" fill="#b0a190" clip-path="url(#poly)"/>
<rect x="1201.00" y="303" width="4.80" height="490" fill="url(#stw)"/>
<rect x="1212.90" y="303" width="5.00" height="490" fill="url(#stw)"/>
<rect x="1223.70" y="303" width="3.80" height="490" fill="url(#stw)"/>
<rect x="1234.70" y="303" width="5.00" height="490" fill="url(#stw)"/>
<rect x="1245.60" y="303" width="3.80" height="490" fill="url(#stw)"/>
<rect x="1256.60" y="303" width="5.00" height="490" fill="url(#stw)"/>
<rect x="1267.50" y="303" width="3.80" height="490" fill="url(#stw)"/>
<rect x="1278.50" y="303" width="5.00" height="490" fill="url(#stw)"/>
<rect x="1289.10" y="303" width="3.80" height="490" fill="url(#stw)"/>
<rect x="1301.60" y="303" width="4.80" height="490" fill="url(#stw)"/>
<rect x="1298" y="303" width="110" height="45.5" fill="#a8a5ac"/>
<rect x="1298" y="303" width="110" height="45.5" fill="#b0a190" clip-path="url(#poly)"/>
<rect x="1301.50" y="303" width="4.80" height="45.5" fill="url(#stw)"/>
<rect x="1313.40" y="303" width="5.00" height="45.5" fill="url(#stw)"/>
<rect x="1324.20" y="303" width="3.80" height="45.5" fill="url(#stw)"/>
<rect x="1335.20" y="303" width="5.00" height="45.5" fill="url(#stw)"/>
<rect x="1346.10" y="303" width="3.80" height="45.5" fill="url(#stw)"/>
<rect x="1357.10" y="303" width="5.00" height="45.5" fill="url(#stw)"/>
<rect x="1368.00" y="303" width="3.80" height="45.5" fill="url(#stw)"/>
<rect x="1379.00" y="303" width="5.00" height="45.5" fill="url(#stw)"/>
<rect x="1389.60" y="303" width="3.80" height="45.5" fill="url(#stw)"/>
<rect x="1402.10" y="303" width="4.80" height="45.5" fill="url(#stw)"/>
<rect x="797.5" y="303" width="8.899999999999977" height="569" fill="#958680" clip-path="url(#poly)"/>
<rect x="802.0" y="303" width="3" height="569" fill="#7a706b" opacity="0.8" clip-path="url(#poly)"/>
<line x1="797.5" y1="303" x2="797.5" y2="872" stroke="#3a3434" stroke-width="1" stroke-dasharray="1.5 1.5"/>
<line x1="806.4" y1="303" x2="806.4" y2="872" stroke="#6a6060" stroke-width="1" stroke-dasharray="1.5 1.5" opacity="0.8"/>
<rect x="897.5" y="303" width="9.0" height="569" fill="#958680" clip-path="url(#poly)"/>
<rect x="902.0" y="303" width="3" height="569" fill="#7a706b" opacity="0.8" clip-path="url(#poly)"/>
<line x1="897.5" y1="303" x2="897.5" y2="872" stroke="#3a3434" stroke-width="1" stroke-dasharray="1.5 1.5"/>
<line x1="906.5" y1="303" x2="906.5" y2="872" stroke="#6a6060" stroke-width="1" stroke-dasharray="1.5 1.5" opacity="0.8"/>
<rect x="997.5" y="303" width="9.0" height="569" fill="#958680" clip-path="url(#poly)"/>
<rect x="1002.0" y="303" width="3" height="569" fill="#7a706b" opacity="0.8" clip-path="url(#poly)"/>
<line x1="997.5" y1="303" x2="997.5" y2="872" stroke="#3a3434" stroke-width="1" stroke-dasharray="1.5 1.5"/>
<line x1="1006.5" y1="303" x2="1006.5" y2="872" stroke="#6a6060" stroke-width="1" stroke-dasharray="1.5 1.5" opacity="0.8"/>
<rect x="1097.5" y="303" width="9.0" height="569" fill="#958680" clip-path="url(#poly)"/>
<rect x="1102.0" y="303" width="3" height="569" fill="#7a706b" opacity="0.8" clip-path="url(#poly)"/>
<line x1="1097.5" y1="303" x2="1097.5" y2="872" stroke="#3a3434" stroke-width="1" stroke-dasharray="1.5 1.5"/>
<line x1="1106.5" y1="303" x2="1106.5" y2="872" stroke="#6a6060" stroke-width="1" stroke-dasharray="1.5 1.5" opacity="0.8"/>
<rect x="1197.5" y="303" width="9.0" height="490" fill="#958680" clip-path="url(#poly)"/>
<rect x="1202.0" y="303" width="3" height="490" fill="#7a706b" opacity="0.8" clip-path="url(#poly)"/>
<line x1="1197.5" y1="303" x2="1197.5" y2="793" stroke="#3a3434" stroke-width="1" stroke-dasharray="1.5 1.5"/>
<line x1="1206.5" y1="303" x2="1206.5" y2="793" stroke="#6a6060" stroke-width="1" stroke-dasharray="1.5 1.5" opacity="0.8"/>
<rect x="1197.5" y="793" width="9.5" height="79" fill="#a8a5ac"/>
<rect x="1197.5" y="793" width="9.5" height="79" fill="#b0a190" clip-path="url(#poly)"/>
<rect x="1202" y="793" width="3" height="79" fill="url(#stg)"/>
<rect x="1197.5" y="303" width="110" height="490" fill="none" stroke="#333" stroke-width="0.8" stroke-dasharray="1.5 1.5" opacity="0.8"/>
<rect x="1298" y="303" width="110" height="45.5" fill="none" stroke="#333" stroke-width="0.8" stroke-dasharray="1.5 1.5" opacity="0.8"/>
<rect x="697" y="303" width="109.5" height="569" fill="none" stroke="#333" stroke-width="0.8" stroke-dasharray="1.5 1.5" opacity="0.7"/>
<rect x="597" y="427.5" width="109" height="444.5" fill="#8d7e80"/>
<rect x="600.50" y="427.5" width="4.80" height="444.5" fill="url(#sts)"/>
<rect x="612.40" y="427.5" width="5.00" height="444.5" fill="url(#sts)"/>
<rect x="623.20" y="427.5" width="3.80" height="444.5" fill="url(#sts)"/>
<rect x="634.20" y="427.5" width="5.00" height="444.5" fill="url(#sts)"/>
<rect x="645.10" y="427.5" width="3.80" height="444.5" fill="url(#sts)"/>
<rect x="656.10" y="427.5" width="5.00" height="444.5" fill="url(#sts)"/>
<rect x="667.00" y="427.5" width="3.80" height="444.5" fill="url(#sts)"/>
<rect x="678.00" y="427.5" width="5.00" height="444.5" fill="url(#sts)"/>
<rect x="688.60" y="427.5" width="3.80" height="444.5" fill="url(#sts)"/>
<rect x="701.10" y="427.5" width="4.80" height="444.5" fill="url(#sts)"/>
<clipPath id="shc"><rect x="706.5" y="303.5" width="1" height="1"/><rect x="706" y="303.5" width="501" height="569.5"/><rect x="697" y="303.5" width="9" height="124"/><rect x="1197.5" y="303.5" width="110" height="490"/><rect x="1298" y="303.5" width="110" height="45.5"/></clipPath>
<g clip-path="url(#shc)" opacity="0.17">
<line x1="688.5" y1="300" x2="688.5" y2="873" stroke="#c8d4e4" stroke-width="1" stroke-dasharray="2 1"/>
<line x1="779.5" y1="300" x2="779.5" y2="873" stroke="#c8d4e4" stroke-width="1" stroke-dasharray="2 1"/>
<line x1="870.5" y1="300" x2="870.5" y2="873" stroke="#c8d4e4" stroke-width="1" stroke-dasharray="2 1"/>
<line x1="961.5" y1="300" x2="961.5" y2="873" stroke="#c8d4e4" stroke-width="1" stroke-dasharray="2 1"/>
<line x1="1052.5" y1="300" x2="1052.5" y2="873" stroke="#c8d4e4" stroke-width="1" stroke-dasharray="2 1"/>
<line x1="1143.5" y1="300" x2="1143.5" y2="873" stroke="#c8d4e4" stroke-width="1" stroke-dasharray="2 1"/>
<line x1="1234.5" y1="300" x2="1234.5" y2="873" stroke="#c8d4e4" stroke-width="1" stroke-dasharray="2 1"/>
<line x1="1325.5" y1="300" x2="1325.5" y2="873" stroke="#c8d4e4" stroke-width="1" stroke-dasharray="2 1"/>
<line x1="1416.5" y1="300" x2="1416.5" y2="873" stroke="#c8d4e4" stroke-width="1" stroke-dasharray="2 1"/>
<line x1="597" y1="781.5" x2="1410" y2="781.5" stroke="#c8d4e4" stroke-width="1" stroke-dasharray="2 1"/>
<line x1="597" y1="690.5" x2="1410" y2="690.5" stroke="#c8d4e4" stroke-width="1" stroke-dasharray="2 1"/>
<line x1="597" y1="599.5" x2="1410" y2="599.5" stroke="#c8d4e4" stroke-width="1" stroke-dasharray="2 1"/>
<line x1="597" y1="508.5" x2="1410" y2="508.5" stroke="#c8d4e4" stroke-width="1" stroke-dasharray="2 1"/>
<line x1="597" y1="417.5" x2="1410" y2="417.5" stroke="#c8d4e4" stroke-width="1" stroke-dasharray="2 1"/>
<line x1="597" y1="326.5" x2="1410" y2="326.5" stroke="#c8d4e4" stroke-width="1" stroke-dasharray="2 1"/>
</g>
<line x1="725" y1="304" x2="1307" y2="304" stroke="#cc6a6a" stroke-width="2"/>
<line x1="725" y1="304" x2="1307" y2="304" stroke="#4a2a2a" stroke-width="2" stroke-dasharray="2 1"/>
<line x1="697" y1="428" x2="697" y2="872" stroke="#333" stroke-width="1" stroke-dasharray="1.5 1.5" opacity="0.8"/>
<line x1="725" y1="303" x2="597" y2="872" stroke="#6a4848" stroke-width="1" stroke-dasharray="2 2" opacity="0.8"/>
<line x1="1307" y1="303" x2="1180" y2="873" stroke="#b85050" stroke-width="1.1" opacity="0.85"/>
<line x1="1307" y1="303" x2="1180" y2="873" stroke="#3a2a2a" stroke-width="1.1" stroke-dasharray="2 2" opacity="0.6"/>
<line x1="276" y1="873" x2="1653" y2="873" stroke="#189a18" stroke-width="2" stroke-dasharray="4 2"/>
<rect x="597" y="427.5" width="109" height="444.5" fill="none" stroke="#e04040" stroke-width="1.8" stroke-dasharray="1.6 1.4" opacity="0.9"/>
<rect x="647" y="423" width="10" height="5" fill="#ffff00" stroke="#222" stroke-width="0.8" stroke-dasharray="1.2 1.2"/>
<rect x="647" y="428" width="10" height="5" fill="#8a8060" opacity="0.6"/>
<rect x="647" y="872" width="10" height="5" fill="#ffff00" stroke="#222" stroke-width="0.8" stroke-dasharray="1.2 1.2"/>
<rect x="647" y="867" width="10" height="5" fill="#8a8060" opacity="0.5"/>
<clipPath id="ctop"><rect x="690" y="303.5" width="700" height="20"/></clipPath><clipPath id="cbot"><rect x="597" y="850" width="700" height="23"/></clipPath>
<circle cx="725" cy="302.5" r="4.6" fill="#000"/><circle cx="725" cy="302.5" r="4.6" fill="#9a8a80" opacity="0.6" clip-path="url(#ctop)"/>
<circle cx="1307" cy="302.5" r="4.6" fill="#000"/><circle cx="1307" cy="302.5" r="4.6" fill="#9a9096" opacity="0.6" clip-path="url(#ctop)"/>
<circle cx="597" cy="873" r="4.6" fill="#000"/><circle cx="597" cy="873" r="4.6" fill="#7a6a6a" opacity="0.6" clip-path="url(#cbot)"/>
<circle cx="1180" cy="873" r="4.6" fill="#000"/><circle cx="1180" cy="873" r="4.6" fill="#9a8e88" opacity="0.6" clip-path="url(#cbot)"/>
<text x="1018.5" y="317" font-family="Liberation Sans" font-size="11.5" fill="#4e4e58" text-anchor="middle">640cm</text>
<text x="890.5" y="886" font-family="Liberation Sans" font-size="11.5" fill="#3a3a44" text-anchor="middle">640cm</text>
<text transform="translate(792.5,588.5) rotate(90)" font-family="Liberation Sans" font-size="11.5" fill="#4e4e58" text-anchor="middle">625cm</text>
<text transform="translate(892.5,588.5) rotate(90)" font-family="Liberation Sans" font-size="11.5" fill="#4e4e58" text-anchor="middle">625cm</text>
<text transform="translate(992.5,588.5) rotate(90)" font-family="Liberation Sans" font-size="11.5" fill="#4e4e58" text-anchor="middle">625cm</text>
<text transform="translate(1092.5,588.5) rotate(90)" font-family="Liberation Sans" font-size="11.5" fill="#4e4e58" text-anchor="middle">625cm</text>
<text transform="translate(1192.5,588.5) rotate(90)" font-family="Liberation Sans" font-size="11.5" fill="#4e4e58" text-anchor="middle">625cm</text>
<text transform="translate(1294.5,548) rotate(90)" font-family="Liberation Sans" font-size="11.5" fill="#4e4e58" text-anchor="middle">538cm</text>
<text transform="translate(1394.5,325.5) rotate(90)" font-family="Liberation Sans" font-size="11.5" fill="#4e4e58" text-anchor="middle">50cm</text>
<text transform="translate(1249,598) rotate(-77.4)" font-family="Liberation Sans" font-size="11.5" fill="#4e4e58" text-anchor="middle">640cm</text>
<text transform="translate(666,583) rotate(-77.4)" font-family="Liberation Sans" font-size="11.5" fill="#6e6262" opacity="0.8" text-anchor="middle">640cm</text>
<text transform="translate(693,648) rotate(90)" font-family="Liberation Sans" font-size="11.5" fill="#7a6e6e" opacity="0.7" text-anchor="middle">489cm</text>
<path d="M535.5 274.5 L535.5 290.3 L539.6 286.6 L542.3 292.6 L544.6 291.5 L542.2 285.8 L547 285.8 Z" fill="#fff" stroke="#111" stroke-width="1.1" stroke-linejoin="round"/>
</svg>
<!--/CANVAS-->
<!-- right panel -->
<div class="a" style="left:1653px;top:152px;width:3px;height:790px;background:#cacad6"></div>
<div class="a" style="left:1656px;top:158px;width:276px;height:28px;background:#ececf1"></div>
<div class="a" style="left:1656px;top:186px;width:276px;height:1px;background:#d4d4de"></div>
<svg class="a" style="left:1657px;top:161px" width="8" height="19" viewBox="0 0 8 19"><defs><pattern id="gd" width="4" height="4" patternUnits="userSpaceOnUse"><rect x="1" y="1" width="1.2" height="1.2" fill="#111"/><rect x="3" y="3" width="1.2" height="1.2" fill="#111"/></pattern></defs><rect x="0" y="0" width="7" height="19" fill="url(#gd)"/></svg>
<svg class="a" style="left:1670px;top:163px" width="15" height="14" viewBox="0 0 15 14"><rect x="4" y="1" width="9.5" height="9.5" rx="2.5" fill="none" stroke="#ff6a00" stroke-width="1.6"/><rect x="1" y="3.5" width="9.5" height="9.5" rx="2.5" fill="#ececf1" stroke="#ff6a00" stroke-width="1.6"/><path d="M2.5 7.5 L5.5 11 L12.5 2.5" fill="none" stroke="#333" stroke-width="1.8"/></svg>
<svg class="a" style="left:1693px;top:163px" width="15" height="14" viewBox="0 0 15 14"><rect x="4" y="1" width="9.5" height="9.5" rx="2.5" fill="none" stroke="#ff6a00" stroke-width="1.6"/><rect x="1" y="3.5" width="9.5" height="9.5" rx="2.5" fill="#ececf1" stroke="#ff6a00" stroke-width="1.6"/></svg>
<div class="a" style="left:1656px;top:187px;width:276px;height:409px;background:#fff"></div>
<div class="a" style="left:1657px;top:188px;width:274px;height:38px;background:#64acdf"></div>
<div class="a" style="left:1665px;top:200px;width:14px;height:14px;background:#fff"></div>
<svg class="a" style="left:1665px;top:200px" width="14" height="14" viewBox="0 0 14 14"><path d="M3 7 L6 10.5 L11.5 3.5" fill="none" stroke="#111" stroke-width="1.8"/></svg>
<svg class="a" style="left:1681px;top:198px" width="16" height="18" viewBox="1681 198 16 18"><path d="M1682.6 202 Q1682.6 200.9 1684 200.9 H1694.2 Q1695.5 200.9 1695.5 202" fill="none" stroke="#1a3448" stroke-width="1.5"/><path d="M1686.5 200.6 Q1687 199.2 1689 199.2 Q1691 199.2 1691.6 200.6" fill="none" stroke="#1a3448" stroke-width="1.2"/><path d="M1682.8 202.6 H1695.3" stroke="#2a5a7e" stroke-width="1.2"/><path d="M1683.7 203.5 V213.6 Q1683.7 214.6 1684.7 214.6 H1693.3 Q1694.3 214.6 1694.3 213.6 V203.5" fill="none" stroke="#1a3448" stroke-width="1.3"/><path d="M1686 204.6 V212.2 M1689 204.6 V212.2 M1692 204.6 V212.2" stroke="#1a3448" stroke-width="1.5" stroke-linecap="round"/></svg>
<svg class="a" style="left:1697px;top:199px" width="16" height="16" viewBox="0 0 16 16"><defs><radialGradient id="gxb"><stop offset="0" stop-color="#777"/><stop offset="1" stop-color="#9d9d9d"/></radialGradient></defs><rect x="0.3" y="0.2" width="15.4" height="15.5" rx="1.5" fill="url(#gxb)"/><path d="M3.5 3.5 L12.5 12.5 M12.5 3.5 L3.5 12.5" stroke="#fff" stroke-width="2.8"/></svg>
<div class="t" style="left:1734px;top:199px;color:#fff;font-size:10.5px">Blacha trapezowa TRB-8</div>
<div class="a" style="left:1656px;top:596px;width:276px;height:1px;background:#cfd0dc"></div>
<div class="a" style="left:1656px;top:597px;width:276px;height:49px;background:#ececf1"></div>
<div class="t" style="left:1674px;top:604px;font-size:10.5px">J.m.=mm</div>
<div class="a" style="left:1656px;top:646px;width:276px;height:296px;background:#fff"></div>
<div class="a" style="left:1656px;top:646px;width:276px;height:21px;background:#f3f3f6"></div>
<div class="a" style="left:1671px;top:667px;width:261px;height:21px;background:#c6dcf2"></div>
<div class="a" style="left:1656px;top:667px;width:15px;height:168px;background:#f3f3f6"></div>
<div class="a" style="left:1656px;top:646px;width:276px;height:1px;background:#d6d6e2"></div>
<div class="a" style="left:1656px;top:667px;width:276px;height:1px;background:#d6d6e2"></div>
<div class="a" style="left:1656px;top:688px;width:276px;height:1px;background:#d6d6e2"></div>
<div class="a" style="left:1656px;top:709px;width:276px;height:1px;background:#d6d6e2"></div>
<div class="a" style="left:1656px;top:730px;width:276px;height:1px;background:#d6d6e2"></div>
<div class="a" style="left:1656px;top:751px;width:276px;height:1px;background:#d6d6e2"></div>
<div class="a" style="left:1656px;top:772px;width:276px;height:1px;background:#d6d6e2"></div>
<div class="a" style="left:1656px;top:793px;width:276px;height:1px;background:#d6d6e2"></div>
<div class="a" style="left:1656px;top:814px;width:276px;height:1px;background:#d6d6e2"></div>
<div class="a" style="left:1656px;top:835px;width:276px;height:1px;background:#d6d6e2"></div>
<div class="a" style="left:1671px;top:646px;width:1px;height:189px;background:#d6d6e2"></div>
<div class="a" style="left:1707px;top:646px;width:1px;height:189px;background:#d6d6e2"></div>
<div class="a" style="left:1767px;top:646px;width:1px;height:189px;background:#d6d6e2"></div>
<div class="a" style="left:1827px;top:646px;width:1px;height:189px;background:#d6d6e2"></div>
<div class="a" style="left:1887px;top:646px;width:1px;height:189px;background:#d6d6e2"></div>
<div class="a" style="left:1932px;top:152px;width:3px;height:790px;background:#cacad8"></div>

<div class="a" style="left:1655px;top:158px;width:1px;height:784px;background:#d0d0dc"></div>
<div class="t" style="left:1676px;top:653px;font-size:11.3px">ID</div>
<div class="t" style="left:1712px;top:653px;font-size:11.3px">Szer</div>
<div class="t" style="left:1772px;top:653px;font-size:11.3px">Wys</div>
<div class="t" style="left:1832px;top:653px;font-size:11.3px">Ilość</div>
<div class="t" style="left:1891.5px;top:653px;font-size:11.3px">X</div>
<div class="a" style="left:1662px;top:675px;width:0;height:0;border-top:3.5px solid transparent;border-bottom:3.5px solid transparent;border-left:4px solid #111"></div>
<div class="t" style="right:233px;top:674px;font-size:11.3px">1</div>
<div class="t" style="right:172px;top:674px;font-size:11.3px">1100</div>
<div class="t" style="right:112px;top:674px;font-size:11.3px">4890</div>
<div class="t" style="right:52px;top:674px;font-size:11.3px">1</div>
<div class="t" style="left:1891.5px;top:674px;font-size:11.3px">True</div>
<div class="t" style="right:233px;top:695px;font-size:11.3px">2</div>
<div class="t" style="right:172px;top:695px;font-size:11.3px">1100</div>
<div class="t" style="right:112px;top:695px;font-size:11.3px">6250</div>
<div class="t" style="right:52px;top:695px;font-size:11.3px">1</div>
<div class="t" style="left:1891.5px;top:695px;font-size:11.3px">False</div>
<div class="t" style="right:233px;top:716px;font-size:11.3px">2</div>
<div class="t" style="right:172px;top:716px;font-size:11.3px">1100</div>
<div class="t" style="right:112px;top:716px;font-size:11.3px">6250</div>
<div class="t" style="right:52px;top:716px;font-size:11.3px">1</div>
<div class="t" style="left:1891.5px;top:716px;font-size:11.3px">False</div>
<div class="t" style="right:233px;top:737px;font-size:11.3px">2</div>
<div class="t" style="right:172px;top:737px;font-size:11.3px">1100</div>
<div class="t" style="right:112px;top:737px;font-size:11.3px">6250</div>
<div class="t" style="right:52px;top:737px;font-size:11.3px">1</div>
<div class="t" style="left:1891.5px;top:737px;font-size:11.3px">False</div>
<div class="t" style="right:233px;top:758px;font-size:11.3px">2</div>
<div class="t" style="right:172px;top:758px;font-size:11.3px">1100</div>
<div class="t" style="right:112px;top:758px;font-size:11.3px">6250</div>
<div class="t" style="right:52px;top:758px;font-size:11.3px">1</div>
<div class="t" style="left:1891.5px;top:758px;font-size:11.3px">False</div>
<div class="t" style="right:233px;top:779px;font-size:11.3px">2</div>
<div class="t" style="right:172px;top:779px;font-size:11.3px">1100</div>
<div class="t" style="right:112px;top:779px;font-size:11.3px">6250</div>
<div class="t" style="right:52px;top:779px;font-size:11.3px">1</div>
<div class="t" style="left:1891.5px;top:779px;font-size:11.3px">False</div>
<div class="t" style="right:233px;top:800px;font-size:11.3px">3</div>
<div class="t" style="right:172px;top:800px;font-size:11.3px">1100</div>
<div class="t" style="right:112px;top:800px;font-size:11.3px">5380</div>
<div class="t" style="right:52px;top:800px;font-size:11.3px">1</div>
<div class="t" style="left:1891.5px;top:800px;font-size:11.3px">False</div>
<div class="t" style="right:233px;top:821px;font-size:11.3px">4</div>
<div class="t" style="right:172px;top:821px;font-size:11.3px">1100</div>
<div class="t" style="right:112px;top:821px;font-size:11.3px">500</div>
<div class="t" style="right:52px;top:821px;font-size:11.3px">1</div>
<div class="t" style="left:1891.5px;top:821px;font-size:11.3px">False</div>



</body></html>
